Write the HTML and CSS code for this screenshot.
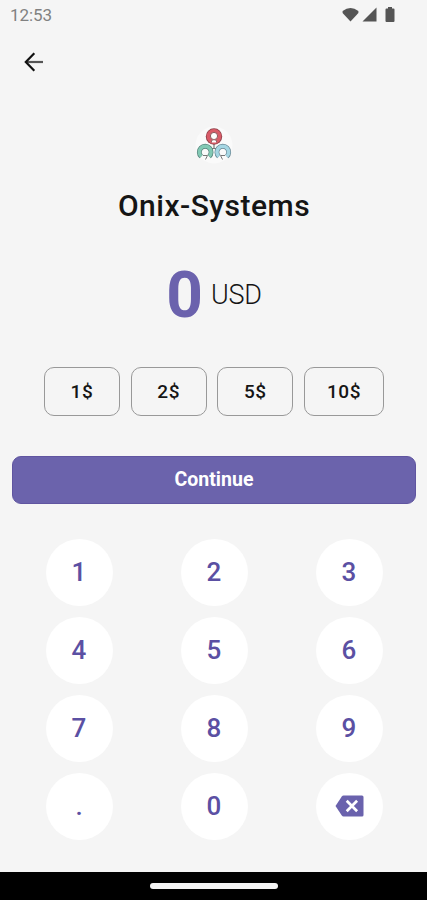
FILE: index.html
```
<!DOCTYPE html>
<html lang="en">
<head>
<meta charset="utf-8">
<title>Onix-Systems</title>
<link rel="stylesheet" href="styles.css">
</head>
<body>
<header class="status">
  <span class="time">12:53</span>
  <svg class="status-icons" width="54" height="18" viewBox="0 0 54 18" fill="#555">
    <path d="M0.600 4 Q8.500 -2 16.400 4 V6 L8.500 14.500 .6 6Z"/>
    <path d="M20.500 14.500 H34.500 V.5Z"/>
    <path d="M46 .1h4v1.500h1.500q1 0 1 1v11.400q0 1-1 1h-7q-1 0-1-1V2.600q0-1 1-1H46z"/>
  </svg>
</header>
<nav class="toolbar">
  <svg width="20" height="20" viewBox="0 0 20 20" fill="none" stroke-width="2.200">
    <path d="M2 10H19" stroke="#555"/><path d="M10.300 1.300 1.800 10l8.500 8.700" stroke="#111"/>
  </svg>
</nav>
<main>
  <svg class="logo" width="38" height="38" viewBox="0 0 38 38" fill="none">
    <circle cx="19" cy="19" r="18.500" fill="#fafafa"/>
    <path d="M19 17v6M13 22.500h12" stroke="#777" stroke-width="1.200"/>
    <circle cx="19" cy="10.500" r="8.200" fill="#8a4048"/>
    <circle cx="19" cy="10.500" r="7.400" fill="#d95b68"/>
    <circle cx="19" cy="10" r="3.600" fill="#fff" stroke="#8a5a5e" stroke-width="1"/>
    <path d="M16.500 16.500V14.500q2.500-1.800 5 0v2" fill="#fff" stroke="#8a5a5e" stroke-width=".9"/>
    <g stroke-width="4.800">
      <path d="M6.200 30.500A5.900 5.900 0 1 1 14.200 30.500" stroke="#548079"/>
      <path d="M23.800 30.500A5.900 5.900 0 1 1 31.800 30.500" stroke="#658491"/>
    </g>
    <g stroke-width="3.500">
      <path d="M6.200 30.500A5.900 5.900 0 1 1 14.200 30.500" stroke="#82c9b4"/>
      <path d="M23.800 30.500A5.900 5.900 0 1 1 31.800 30.500" stroke="#a5d6e3"/>
    </g>
    <path d="M8 29.500h4.500l-2 4M30 29.500h-4.500l2 4" stroke="#777"/>
  </svg>
  <h1>Onix-Systems</h1>
  <div class="amount"><span class="value">0</span><span class="currency">USD</span></div>
  <div class="chips">
    <button class="chip">1$</button><button class="chip">2$</button><button class="chip">5$</button><button class="chip wide">10$</button>
  </div>
  <button class="continue">Continue</button>
  <div class="keypad">
    <button>1</button><button>2</button><button>3</button>
    <button>4</button><button>5</button><button>6</button>
    <button>7</button><button>8</button><button>9</button>
    <button>.</button><button>0</button>
    <button aria-label="Delete"><svg width="29" height="22" viewBox="0 0 29 22"><path d="M8.500 .5H27q1.500 0 1.500 1.500v18q0 1.500-1.500 1.500H8.500Q7.500 21.500 6.800 20.500L.5 11 6.800 1.500Q7.500 .5 8.500 .5z" fill="#6a62ad"/><path d="M11.700 5.800l10.400 10.400M22.100 5.800 11.700 16.200" stroke="#fff" stroke-width="2.700"/></svg></button>
  </div>
</main>
<footer class="system-nav"><div class="handle"></div></footer>
</body>
</html>
```
FILE: styles.css
```
* { box-sizing: border-box; }
body {
  margin: 0;
  height: 900px;
  display: flex;
  flex-direction: column;
  overflow: hidden;
  background: #f5f5f5;
  color: #151515;
  font-family: Roboto, sans-serif;
}
button { border: 0; padding: 0; font-family: inherit; }
svg { display: block; }
.status {
  height: 32px;
  padding: 0 31px 0 10px;
  display: flex;
  justify-content: space-between;
}
.time { font-size: 17px; line-height: 31px; color: #818181; letter-spacing: -.1px; }
.status-icons { margin-top: 7px; }
.toolbar { height: 60px; padding: 20px 0 0 24px; }
main {
  height: 780px;
  padding: 34px 11px 0 12px;
  display: flex;
  flex-direction: column;
  align-items: center;
}
.logo { flex: none; }
h1 {
  margin: 22px 0 0;
  font-size: 30px;
  line-height: 40px;
  font-weight: 500;
  letter-spacing: .5px;
}
.amount {
  height: 76px;
  margin-top: 30px;
  display: flex;
  align-items: center;
  gap: 8px;
}
.value { padding-top: 4px; font-size: 64px; line-height: 76px; font-weight: 700; color: #6b62ad; }
.currency { padding-top: 1px; font-size: 27px; font-weight: 300; letter-spacing: -.2px; }
.chips { margin-top: 35px; display: flex; gap: 10.700px; }
.chip {
  width: 76px;
  height: 49px;
  border: 1px solid #999;
  border-radius: 10px;
  background: transparent;
  color: #151515;
  font-size: 19px;
  font-weight: 500;
  letter-spacing: .6px;
}
.wide { width: 80px; }
.continue {
  width: 100%;
  height: 48px;
  margin-top: 39.500px;
  flex: none;
  border: 1px solid #6055a0;
  border-radius: 9px;
  background: #6b63ac;
  color: #fff;
  font-size: 19.500px;
  font-weight: 700;
}
.keypad {
  margin-top: 35px;
  display: grid;
  grid-template-columns: repeat(3, 67px);
  grid-auto-rows: 67px;
  column-gap: 68px;
  row-gap: 11px;
}
.keypad button {
  display: grid;
  place-items: center;
  border-radius: 50%;
  background: #fff;
  color: #5b50a3;
  font-size: 26px;
  font-weight: 500;
}
.system-nav {
  height: 28px;
  padding-left: 1px;
  display: grid;
  place-items: center;
  background: #000;
}
.handle { width: 128px; height: 6px; border-radius: 3px; background: #f4f4f4; }
```
